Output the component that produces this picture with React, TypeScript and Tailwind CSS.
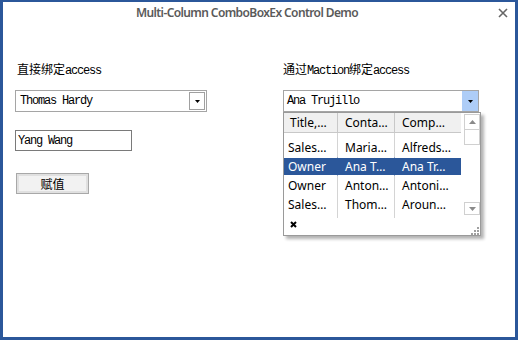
import React from "react";

const mono = "font-['Liberation_Mono',monospace] tracking-[-1.2px]";
const cjk = "font-['Noto_Sans_CJK_SC',sans-serif]";
const ui = "font-['Noto_Sans',sans-serif]";

function Arrow({ color = "#000" }: { color?: string }) {
  return (
    <svg width="5" height="3" viewBox="0 0 5 3">
      <path d="M0 0H5L2.5 3Z" fill={color} />
    </svg>
  );
}

const rows: { c: string[]; sel?: boolean }[] = [
  { c: ["Sales…", "Maria…", "Alfreds…"] },
  { c: ["Owner", "Ana T…", "Ana Tr…"], sel: true },
  { c: ["Owner", "Anton…", "Antoni…"] },
  { c: ["Sales…", "Thom…", "Aroun…"] },
  { c: ["Sales…", "Christ…", "Berglun…"] },
];
const widths = ["w-[54px]", "w-[57px]", "w-[66px]"];
const pads = ["pl-[4px]", "pl-[7px]", "pl-[7px]"];

export default function App() {
  return (
    <div className="w-[518px] h-[340px] bg-white border-[3px] border-t-2 border-[#2b579a] flex flex-col overflow-hidden">
      {/* title bar */}
      <div className="h-[24px] flex items-center shrink-0">
        <div className={`flex-1 text-center text-[12px] font-semibold tracking-[-0.6px] text-[#5a5a5a] leading-none pb-[2px] ${ui}`}>
          Multi-Column ComboBoxEx Control Demo
        </div>
        <div className="w-[24px] h-[24px] flex items-center justify-center pb-[3px]">
          <svg width="10" height="10" viewBox="0 0 10 10">
            <path d="M1 1L9 9M9 1L1 9" stroke="#666" strokeWidth="1.6" />
          </svg>
        </div>
      </div>

      {/* content */}
      <div className="flex pt-[36px] pl-[12px]">
        {/* left column */}
        <div className="w-[192px] flex flex-col">
          <div className="h-[14px] pl-[2px] leading-[14px] text-[12px] text-black whitespace-nowrap">
            <span className={cjk}>直接绑定</span>
            <span className={mono}>access</span>
          </div>
          <div className="mt-[14px] h-[22px] border border-[#a5a5a5] flex items-center">
            <div className={`flex-1 pl-[4px] text-[12px] leading-none text-black ${mono}`}>Thomas Hardy</div>
            <div className="w-[16px] h-[18px] mr-[1px] border border-[#a0a0a0] bg-white flex items-center justify-center">
              <Arrow />
            </div>
          </div>
          <div className="mt-[18px] w-[117px] h-[21px] border border-[#7a7a7a] flex items-center">
            <div className={`pl-[2px] text-[12px] leading-none text-black ${mono}`}>Yang Wang</div>
          </div>
          <div className="mt-[22px] ml-[1px] w-[73px] h-[21px] border border-[#a8a8a8] bg-[#f2f2f2] shadow-[inset_0_0_0_2px_#e0e0e0] flex items-center justify-center">
            <span className={`text-[12px] leading-none text-black ${cjk}`}>赋值</span>
          </div>
        </div>

        {/* right column */}
        <div className="ml-[76px] w-[196px] flex flex-col">
          <div className="h-[14px] leading-[14px] text-[12px] text-black whitespace-nowrap">
            <span className={cjk}>通过</span>
            <span className={mono}>Maction</span>
            <span className={cjk}>绑定</span>
            <span className={mono}>access</span>
          </div>
          <div className="relative mt-[14px] h-[22px] border border-[#a5a5a5] flex items-center">
            <div className={`flex-1 pl-[3px] text-[12px] leading-none text-black ${mono}`}>Ana Trujillo</div>
            <div className="w-[16px] h-[20px] bg-[#aecdf7] flex items-center justify-center">
              <Arrow />
            </div>

            {/* dropdown popup */}
            <div className="absolute left-[-1px] top-[21px] w-[198px] h-[124px] bg-white border border-[#9a9a9a] shadow-[3px_3px_3px_rgba(0,0,0,0.3)] flex flex-col z-10">
              <div className="h-[106px] flex overflow-hidden">
                <div className={`w-[177px] flex flex-col text-[12px] text-black ${ui}`}>
                  {/* header */}
                  <div className="h-[20px] shrink-0 flex bg-[#f0f0f0] border-b border-[#c8c8c8]">
                    {["Title,…", "Conta…", "Comp…"].map((h, i) => (
                      <div
                        key={h}
                        className={`${widths[i]} ${i === 0 ? "pl-[6px]" : "pl-[7px]"} ${i < 2 ? "border-r border-[#c8c8c8]" : ""} h-full leading-[19px] whitespace-nowrap overflow-hidden`}
                      >
                        {h}
                      </div>
                    ))}
                  </div>
                  {/* spacer */}
                  <div className="h-[5px] shrink-0 flex">
                    {widths.map((w, i) => (
                      <div key={i} className={`${w} h-full ${i < 2 ? "border-r border-[#d4d4d4]" : ""}`} />
                    ))}
                  </div>
                  {rows.map((r, ri) => (
                    <div key={ri} className="h-[19px] flex shrink-0">
                      {r.c.map((c, i) => (
                        <div
                          key={i}
                          className={`${widths[i]} ${pads[i]} h-full leading-[17px] whitespace-nowrap overflow-hidden ${
                            r.sel
                              ? `bg-[#2b579a] text-white border-y border-white ${i < 2 ? "border-r border-r-[#2b579a]" : ""}`
                              : i < 2
                              ? "border-r border-[#d4d4d4] pt-[1px]"
                              : "pt-[1px]"
                          }`}
                        >
                          {c}
                        </div>
                      ))}
                    </div>
                  ))}
                </div>
                {/* scrollbar */}
                <div className="ml-[3px] w-[16px] flex flex-col pt-[1px] pb-[3px]">
                  <div className="h-[16px] border border-[#d0d0d0] flex items-center justify-center">
                    <svg width="7" height="4" viewBox="0 0 7 4">
                      <path d="M0 4H7L3.5 0Z" fill="#8a8a8a" />
                    </svg>
                  </div>
                  <div className="h-[15px] border border-t-0 border-[#d0d0d0]" />
                  <div className="flex-1" />
                  <div className="h-[13px] border border-[#d0d0d0] flex items-center justify-center">
                    <svg width="7" height="4" viewBox="0 0 7 4">
                      <path d="M0 0H7L3.5 4Z" fill="#8a8a8a" />
                    </svg>
                  </div>
                </div>
              </div>
              {/* footer */}
              <div className="flex-1 flex items-start justify-between pt-[3px] pl-[6px] pr-[1px]">
                <svg width="7" height="7" viewBox="0 0 7 7">
                  <path d="M1 1L6 6M6 1L1 6" stroke="#000" strokeWidth="2" />
                </svg>
                <svg width="9" height="9" viewBox="0 0 9 9" className="mt-[5px]">
                  <rect x="7" y="1" width="2" height="2" fill="#a0a0a0" />
                  <rect x="4" y="4" width="2" height="2" fill="#a0a0a0" />
                  <rect x="7" y="4" width="2" height="2" fill="#a0a0a0" />
                  <rect x="1" y="7" width="2" height="2" fill="#a0a0a0" />
                  <rect x="4" y="7" width="2" height="2" fill="#a0a0a0" />
                  <rect x="7" y="7" width="2" height="2" fill="#a0a0a0" />
                </svg>
              </div>
            </div>
          </div>
        </div>
      </div>
    </div>
  );
}
